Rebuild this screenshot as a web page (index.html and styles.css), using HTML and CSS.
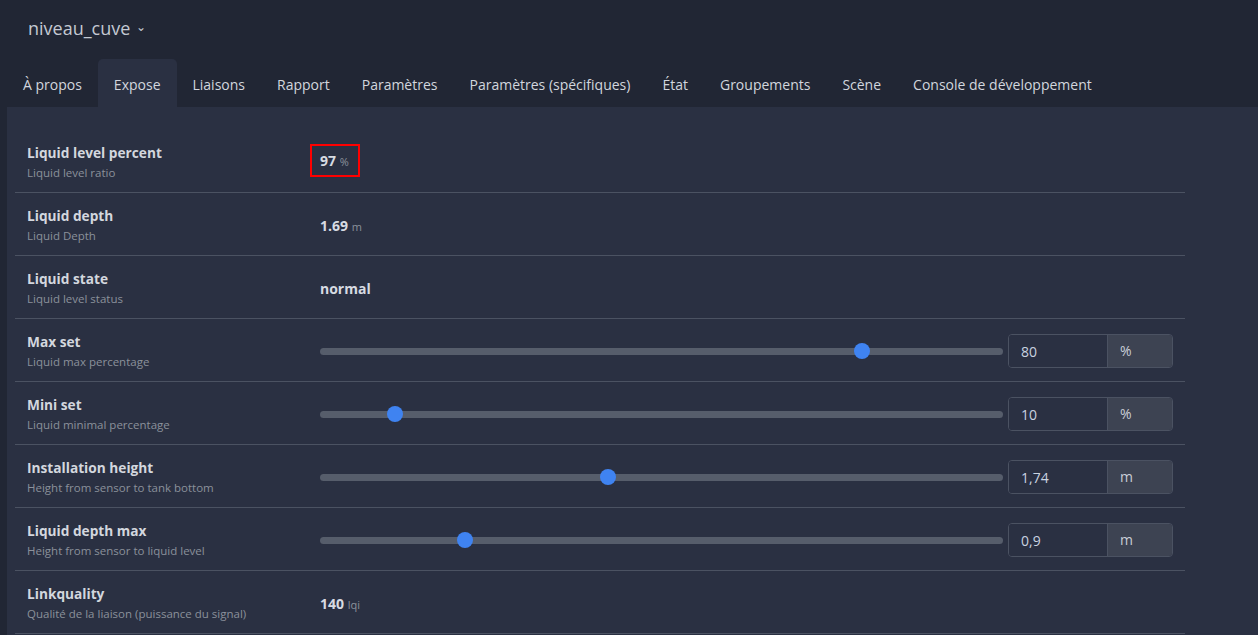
FILE: index.html
```
<!DOCTYPE html>
<html lang="fr">
<head>
<meta charset="UTF-8">
<title>niveau_cuve</title>
<link rel="stylesheet" href="styles.css">
</head>
<body>

<div class="device-title">niveau_cuve <span class="chev">&#8964;</span></div>

<nav class="tabs">
    <a>À propos</a>
    <a class="active">Expose</a>
    <a>Liaisons</a>
    <a>Rapport</a>
    <a>Paramètres</a>
    <a>Paramètres (spécifiques)</a>
    <a>État</a>
    <a>Groupements</a>
    <a>Scène</a>
    <a>Console de développement</a>
</nav>

<div class="panel">
    <div class="list">
        <div class="row">
            <div class="label"><strong>Liquid level percent</strong><small>Liquid level ratio</small></div>
            <div class="value marked">97 <span class="unit">%</span></div>
        </div>
        <div class="row">
            <div class="label"><strong>Liquid depth</strong><small>Liquid Depth</small></div>
            <div class="value">1.69 <span class="unit">m</span></div>
        </div>
        <div class="row">
            <div class="label"><strong>Liquid state</strong><small>Liquid level status</small></div>
            <div class="value">normal</div>
        </div>
        <div class="row">
            <div class="label"><strong>Max set</strong><small>Liquid max percentage</small></div>
            <div class="control">
                <input type="range" min="0" max="100" step="0.1" value="80">
                <div class="field"><input type="text" value="80"><span class="addon">%</span></div>
            </div>
        </div>
        <div class="row">
            <div class="label"><strong>Mini set</strong><small>Liquid minimal percentage</small></div>
            <div class="control">
                <input type="range" min="0" max="100" step="0.1" value="10">
                <div class="field"><input type="text" value="10"><span class="addon">%</span></div>
            </div>
        </div>
        <div class="row">
            <div class="label"><strong>Installation height</strong><small>Height from sensor to tank bottom</small></div>
            <div class="control">
                <input type="range" min="0" max="100" step="0.1" value="42">
                <div class="field"><input type="text" value="1,74"><span class="addon">m</span></div>
            </div>
        </div>
        <div class="row">
            <div class="label"><strong>Liquid depth max</strong><small>Height from sensor to liquid level</small></div>
            <div class="control">
                <input type="range" min="0" max="100" step="0.1" value="20.5">
                <div class="field"><input type="text" value="0,9"><span class="addon">m</span></div>
            </div>
        </div>
        <div class="row">
            <div class="label"><strong>Linkquality</strong><small>Qualité de la liaison (puissance du signal)</small></div>
            <div class="value">140 <span class="unit">lqi</span></div>
        </div>
    </div>
</div>

</body>
</html>
```

FILE: styles.css
```
html, body {
    margin: 0;
    height: 100%;
}
body {
    background-color: #212634;
    color: #c9ced7;
    font-family: "Open Sans", "Noto Sans", sans-serif;
    overflow: hidden;
}
.device-title {
    padding: 16px 0 0 28px;
    height: 43px;
    box-sizing: border-box;
    font-size: 18px;
    color: #c4c9d2;
}
.chev {
    font-size: 12px;
    margin-left: 1px;
    position: relative;
    top: -4px;
}
.tabs {
    display: flex;
    padding-left: 7px;
    height: 48px;
    margin-top: 16px;
}
.tabs a {
    padding: 3px 16px 0;
    font-size: 14px;
    line-height: 45px;
    color: #d2d6de;
    border-radius: 5px 5px 0 0;
}
.tabs a.active {
    background-color: #2a3042;
}
.panel {
    margin-left: 7px;
    background-color: #2a3042;
    height: 100%;
    padding: 23px 0 0 8px;
}
.list {
    width: 1170px;
}
.row {
    display: flex;
    align-items: center;
    height: 62px;
    border-bottom: 1px solid #4b5262;
    padding-left: 12px;
}
.label {
    width: 293px;
    flex-shrink: 0;
    display: flex;
    flex-direction: column;
    padding-top: 3px;
}
.label strong {
    font-size: 13.7px;
    font-weight: 700;
    color: #d3d7de;
    line-height: 20px;
}
.label small {
    font-size: 11.5px;
    color: #8b909b;
    line-height: 20px;
}
.value {
    font-size: 14px;
    font-weight: 700;
    color: #d7dbe2;
    padding-top: 2px;
}
.value .unit {
    font-size: 11px;
    font-weight: 400;
    color: #8b909b;
}
.value.marked {
    outline: 2px solid #ff0000;
    padding: 5px 9px 5px 8px;
    margin-left: -8px;
    margin-top: -2px;
}
.control {
    display: flex;
    align-items: center;
    flex: 1;
    padding-right: 12px;
    gap: 5px;
    padding-top: 2px;
}
.control input[type=range] {
    -webkit-appearance: none;
    appearance: none;
    flex: 1;
    margin: 0;
    height: 7px;
    border-radius: 4px;
    background: #565d6b;
}
.control input[type=range]::-webkit-slider-thumb {
    -webkit-appearance: none;
    width: 16px;
    height: 16px;
    border-radius: 50%;
    background: #3f83f1;
    border: none;
}
.field {
    display: flex;
    height: 34px;
    width: 165px;
    border: 1px solid #4b5262;
    border-radius: 4px;
    box-sizing: border-box;
    overflow: hidden;
}
.field input {
    width: 99px;
    box-sizing: border-box;
    border: none;
    border-right: 1px solid #4b5262;
    background: #2a3042;
    color: #c9d3e0;
    font-family: inherit;
    font-size: 14px;
    padding: 0 12px;
    outline: none;
}
.addon {
    flex: 1;
    background: #3d4352;
    color: #c9ced7;
    font-size: 14px;
    line-height: 32px;
    padding-left: 12px;
}
```
